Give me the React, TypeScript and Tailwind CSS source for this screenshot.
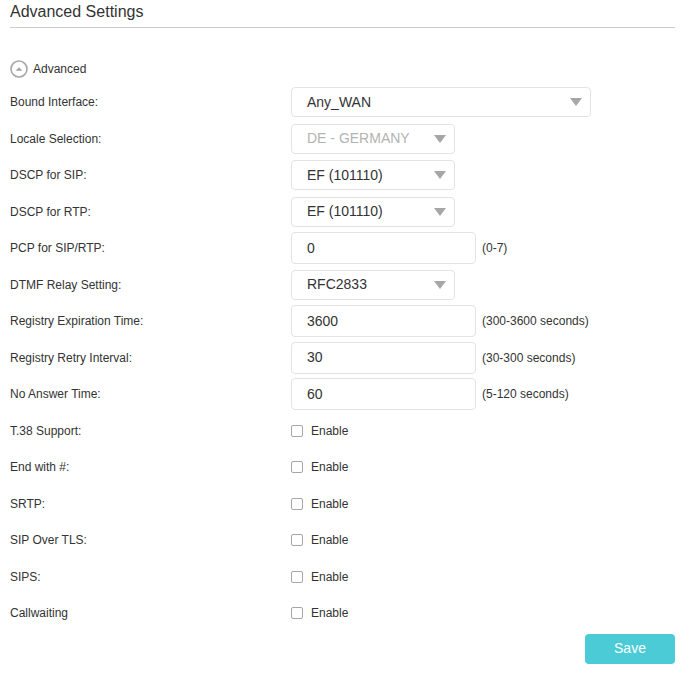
import React from 'react';

type Row =
  | { label: string; kind: 'select'; value: string; wide?: boolean; disabled?: boolean }
  | { label: string; kind: 'input'; value: string; hint: string }
  | { label: string; kind: 'check' };

const rows: Row[] = [
  { label: 'Bound Interface:', kind: 'select', value: 'Any_WAN', wide: true },
  { label: 'Locale Selection:', kind: 'select', value: 'DE - GERMANY', disabled: true },
  { label: 'DSCP for SIP:', kind: 'select', value: 'EF (101110)' },
  { label: 'DSCP for RTP:', kind: 'select', value: 'EF (101110)' },
  { label: 'PCP for SIP/RTP:', kind: 'input', value: '0', hint: '(0-7)' },
  { label: 'DTMF Relay Setting:', kind: 'select', value: 'RFC2833' },
  { label: 'Registry Expiration Time:', kind: 'input', value: '3600', hint: '(300-3600 seconds)' },
  { label: 'Registry Retry Interval:', kind: 'input', value: '30', hint: '(30-300 seconds)' },
  { label: 'No Answer Time:', kind: 'input', value: '60', hint: '(5-120 seconds)' },
  { label: 'T.38 Support:', kind: 'check' },
  { label: 'End with #:', kind: 'check' },
  { label: 'SRTP:', kind: 'check' },
  { label: 'SIP Over TLS:', kind: 'check' },
  { label: 'SIPS:', kind: 'check' },
  { label: 'Callwaiting', kind: 'check' },
];

function Control({ row }: { row: Row }) {
  if (row.kind === 'select') {
    return (
      <div
        className={`flex items-center justify-between h-[30px] rounded-[4px] border border-[#e3e3e3] pl-[15px] pr-[8px] ${
          row.wide ? 'w-[300px]' : 'w-[164px]'
        }`}
      >
        <span className={`text-[14px] ${row.disabled ? 'text-[#b3b3b3]' : 'text-[#333]'}`}>{row.value}</span>
        <svg width="12" height="8" viewBox="0 0 12 8">
          <path d="M0 0h12L6 8z" fill="#a6a6a6" />
        </svg>
      </div>
    );
  }
  if (row.kind === 'input') {
    return (
      <div className="flex items-center gap-[6px]">
        <div className="flex items-center h-[32px] w-[185px] rounded-[4px] border border-[#e3e3e3] pl-[15px] text-[14px] text-[#333]">
          {row.value}
        </div>
        <span className="text-[12px] text-[#333]">{row.hint}</span>
      </div>
    );
  }
  return (
    <div className="flex items-center gap-[8px]">
      <span className="w-[12px] h-[12px] rounded-[2px] border border-[#a6a6a6] bg-white" />
      <span className="text-[12px] text-[#333]">Enable</span>
    </div>
  );
}

export default function App() {
  return (
    <div className="w-[690px] h-[673px] bg-white px-[10px] pt-[3px] text-[#333]" style={{ fontFamily: '"Liberation Sans", Arial, sans-serif' }}>
      <h1 className="text-[16px] leading-[18px] pb-[6px] border-b border-[#cccccc] w-[665px]">Advanced Settings</h1>

      {/* Section toggle */}
      <div className="flex items-center gap-[5px] mt-[31px] h-[20px]">
        <svg width="18" height="18" viewBox="0 0 18 18">
          <circle cx="9" cy="9" r="8" fill="none" stroke="#a6a6a6" strokeWidth="1.6" />
          <path d="M5.5 10.8L9 7.3l3.5 3.5z" fill="#a6a6a6" />
        </svg>
        <span className="text-[12px]">Advanced</span>
      </div>

      <div className="mt-[5px]">
        {rows.map(row => (
          <div key={row.label} className="flex items-center h-[36.5px]">
            <span className="w-[281px] text-[12px]">{row.label}</span>
            <Control row={row} />
          </div>
        ))}
      </div>

      <div className="flex justify-end w-[665px] mt-[2px]">
        <button className="w-[90px] h-[30px] rounded-[4px] bg-[#4acbd6] text-white text-[14px]">Save</button>
      </div>
    </div>
  );
}
